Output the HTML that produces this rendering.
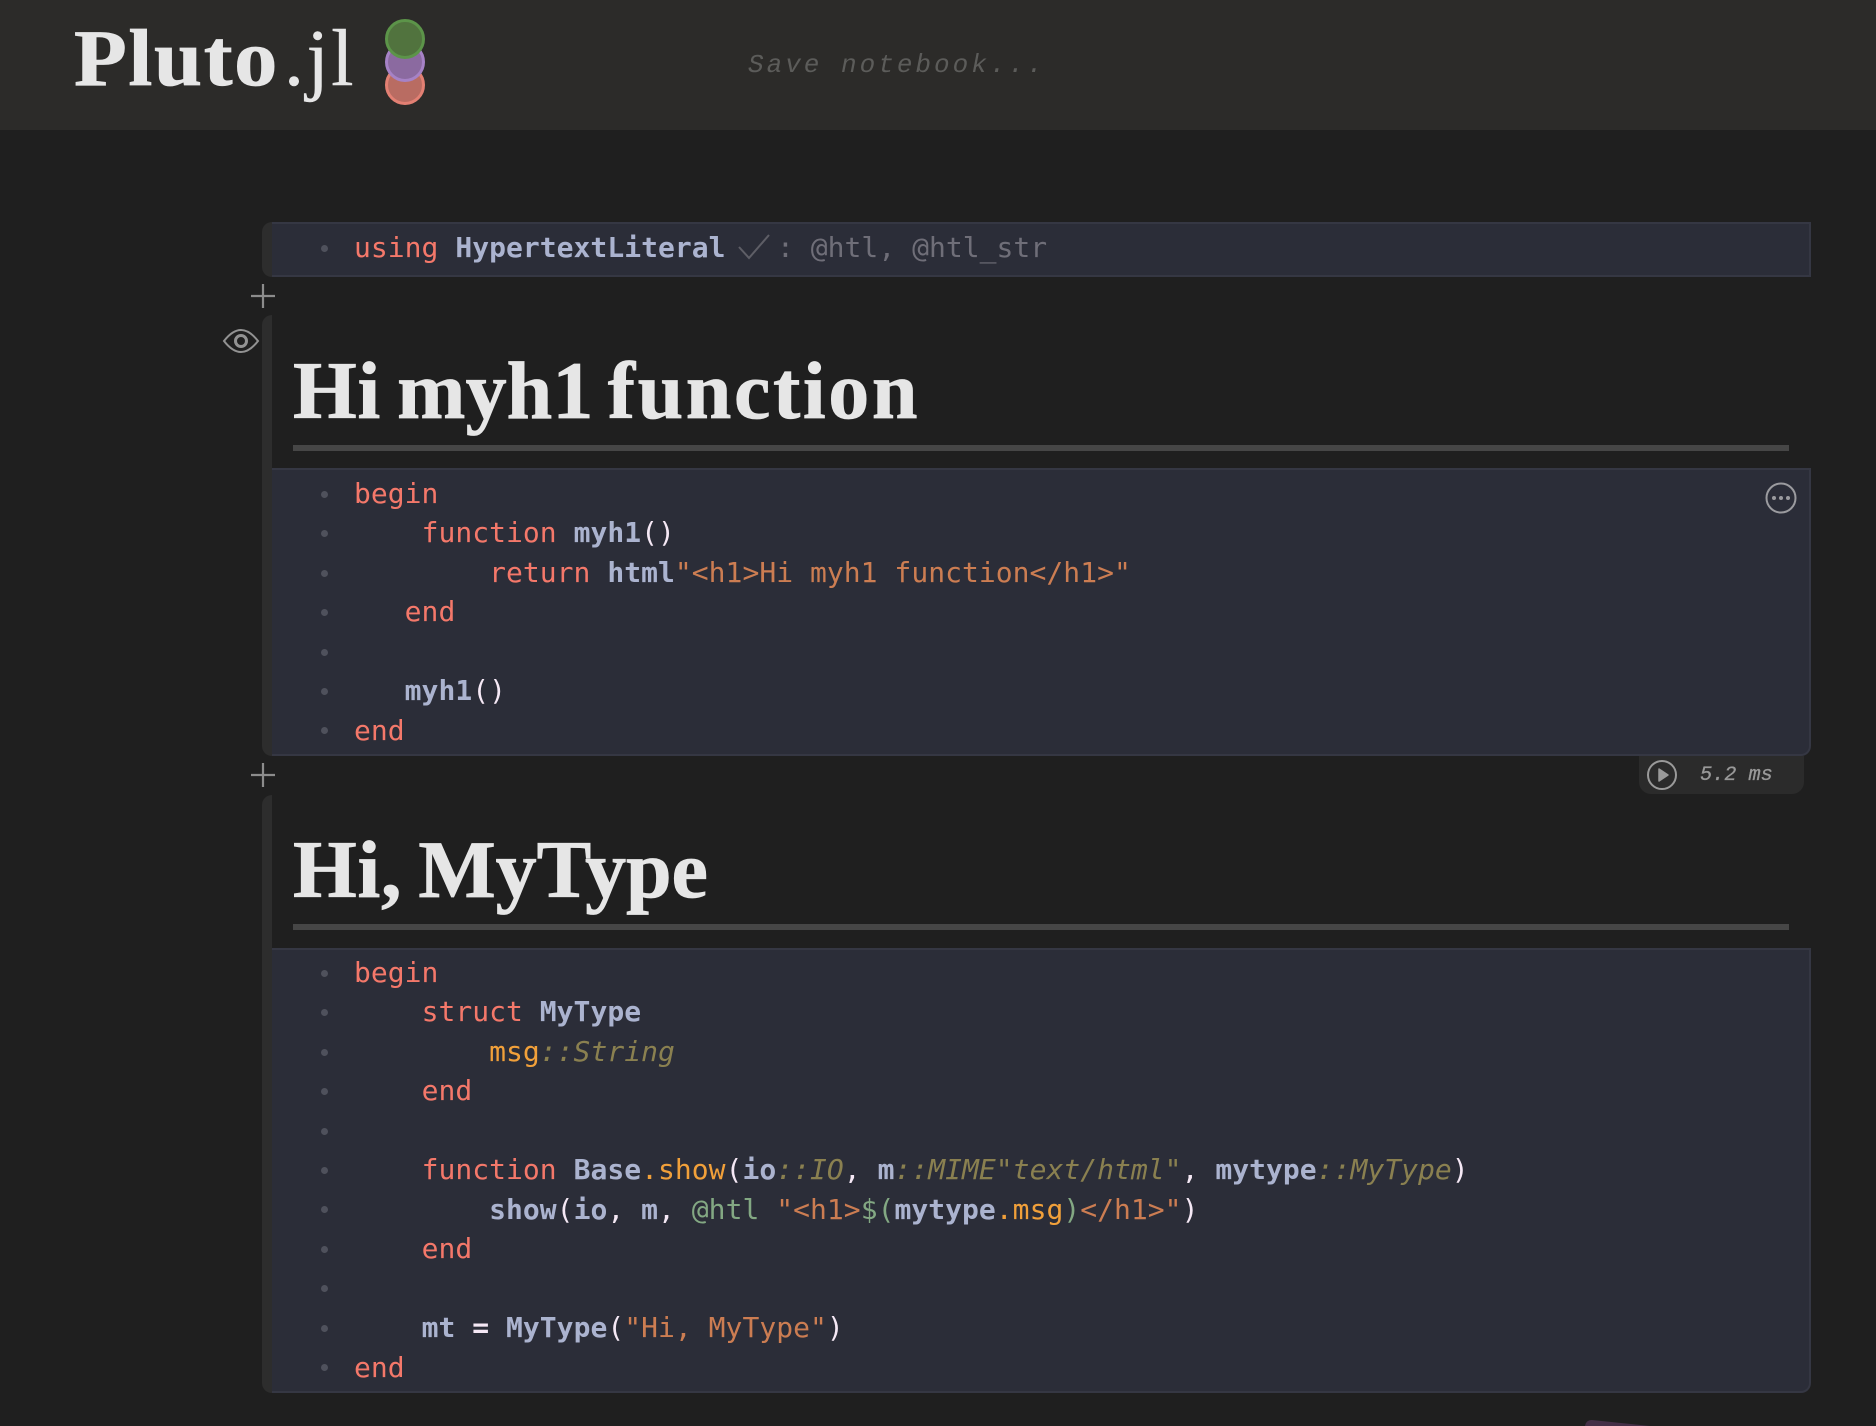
<!DOCTYPE html>
<html lang="en"><head><meta charset="utf-8"><title>Pluto.jl</title>
<style>
html,body{margin:0;padding:0;width:1876px;height:1426px;overflow:hidden;background:#1f1f1f}
.a{position:absolute}
#hdr{left:0;top:0;width:1876px;height:130px;background:#2c2b29}
.logo{top:2px;font:bold 80px/114px "Liberation Serif",serif;color:#e6e6e6;white-space:pre}
.save{left:748px;top:46px;font:italic 26px/38px "Liberation Mono",monospace;letter-spacing:3px;color:#5c5c5a;white-space:pre}
.bar{background:#2d2d2d;left:262px;width:16px}
.code{background:#2b2d38;border:solid #353743;border-width:2px 2px 2px 0;box-sizing:border-box;left:272px;width:1539px}
h1{position:absolute;margin:0;left:293px;font:bold 82px/100px "Liberation Serif",serif;color:#e6e6e6;letter-spacing:.7px;white-space:pre;-webkit-text-stroke:.8px #e6e6e6}
.hr{left:293px;width:1496px;height:6px;background:#464646}
pre{position:absolute;margin:0;left:354px;font:28px/39.45px "DejaVu Sans Mono",monospace;letter-spacing:.03px;color:#f5e8f5}
.k{color:#f4786a}.i{color:#abb3cf;font-weight:bold}.s{color:#cc7d52}.o{color:#f1a03a}.g{color:#6f6e78}
.t{color:#8a8050;font-style:italic}.m{color:#83a883}
.d{position:absolute;left:321px;width:7px;height:7px;border-radius:50%;background:#4f515c}
.rt{left:1639px;top:756px;width:165px;height:38px;background:#2b2b2b;border-radius:0 0 12px 12px}
.ms{left:1700px;top:761px;font:italic 20.2px/30px "Liberation Mono",monospace;color:#999;white-space:pre;-webkit-text-stroke:.3px #999}
</style></head><body>
<div class="a" id="hdr"></div>
<div class="a logo" style="left:74px;letter-spacing:1.5px;transform:scaleX(1.08);transform-origin:0 0;-webkit-text-stroke:.8px #e6e6e6">Pluto</div>
<div class="a logo" style="left:284px;font-weight:normal;letter-spacing:2.5px;-webkit-text-stroke:.5px #e6e6e6">.jl</div>
<svg class="a" style="left:380px;top:15px" width="50" height="95" viewBox="380 15 50 95">
<circle cx="405" cy="85" r="18.5" fill="#b96c62" stroke="#e38073" stroke-width="3"/>
<circle cx="405" cy="62" r="18.5" fill="#8b6aa0" stroke="#a682c6" stroke-width="3"/>
<circle cx="405" cy="39" r="18.5" fill="#51733e" stroke="#5c9449" stroke-width="3"/>
</svg>
<div class="a save">Save notebook...</div>

<div class="a bar" style="top:222px;height:55px;border-radius:10px 0 0 10px"></div>
<div class="a code" style="top:222px;height:55px"></div>
<div class="d" style="top:245px"></div>
<pre style="top:228px"><span class="k">using</span> <span class="i">HypertextLiteral</span></pre>
<svg class="a" style="left:735px;top:232px" width="40" height="30" viewBox="735 232 40 30"><path d="M739 247L749 258L769 235" fill="none" stroke="#5e5e66" stroke-width="2"/></svg>
<pre class="g" style="top:228px;left:777px"><span class="g">: @htl, @htl_str</span></pre>

<svg class="a" style="left:248px;top:281px" width="30" height="30"><path d="M15 3V27M3 15H27" stroke="#8c8c8c" stroke-width="2.2"/></svg>
<svg class="a" style="left:222px;top:326px" width="38" height="30" viewBox="222 326 38 30"><path d="M224 341C231 332 237 330 241 330C245 330 251 332 258 341C251 350 245 352 241 352C237 352 231 350 224 341Z" fill="none" stroke="#929292" stroke-width="2"/><circle cx="241" cy="341" r="5.5" fill="none" stroke="#929292" stroke-width="3"/></svg>

<div class="a bar" style="top:315px;height:441px;width:10px;border-radius:10px 0 0 10px"></div>
<h1 style="top:341px">Hi<span style="margin-left:-5px"> </span><span style="letter-spacing:.1px">myh1</span><span style="margin-left:-7px"> </span><span style="letter-spacing:2.6px">function</span></h1>
<div class="a hr" style="top:445px"></div>
<div class="a code" style="top:468px;height:288px;border-radius:0 0 10px 0"></div>
<div class="d" style="top:491px"></div><div class="d" style="top:530px"></div><div class="d" style="top:570px"></div><div class="d" style="top:609px"></div><div class="d" style="top:649px"></div><div class="d" style="top:688px"></div><div class="d" style="top:727px"></div>
<pre style="top:474px"><span class="k">begin</span>
    <span class="k">function</span> <span class="i">myh1</span>()
        <span class="k">return</span> <span class="i">html</span><span class="s">"&lt;h1&gt;Hi myh1 function&lt;/h1&gt;"</span>
   <span class="k">end</span>

   <span class="i">myh1</span>()
<span class="k">end</span></pre>
<svg class="a" style="left:1764px;top:481px" width="34" height="34" viewBox="1764 481 34 34"><circle cx="1781" cy="498" r="14.5" fill="none" stroke="#9b9b9f" stroke-width="2"/><circle cx="1774" cy="498" r="2" fill="#9b9b9f"/><circle cx="1781" cy="498" r="2" fill="#9b9b9f"/><circle cx="1788" cy="498" r="2" fill="#9b9b9f"/></svg>

<div class="a rt"></div>
<svg class="a" style="left:1645px;top:758px" width="34" height="34" viewBox="1645 758 34 34"><circle cx="1662" cy="775" r="14" fill="none" stroke="#9a9a9a" stroke-width="2"/><path d="M1659 769L1668 775L1659 781Z" fill="#9a9a9a" stroke="#9a9a9a" stroke-width="1.5" stroke-linejoin="round"/></svg>
<div class="a ms">5.2 ms</div>

<svg class="a" style="left:248px;top:760px" width="30" height="30"><path d="M15 3V27M3 15H27" stroke="#8c8c8c" stroke-width="2.2"/></svg>

<div class="a bar" style="top:795px;height:598px;width:10px;border-radius:10px 0 0 10px"></div>
<h1 style="top:820px">Hi,<span style="margin-left:-5px"> </span><span style="letter-spacing:-.1px">MyType</span></h1>
<div class="a hr" style="top:924px"></div>
<div class="a code" style="top:948px;height:445px;border-radius:0 0 10px 0"></div>
<div class="d" style="top:970px"></div><div class="d" style="top:1009px"></div><div class="d" style="top:1049px"></div><div class="d" style="top:1088px"></div><div class="d" style="top:1128px"></div><div class="d" style="top:1167px"></div><div class="d" style="top:1206px"></div><div class="d" style="top:1246px"></div><div class="d" style="top:1285px"></div><div class="d" style="top:1325px"></div><div class="d" style="top:1364px"></div>
<pre style="top:953px"><span class="k">begin</span>
    <span class="k">struct</span> <span class="i">MyType</span>
        <span class="o">msg</span><span class="t">::String</span>
    <span class="k">end</span>

    <span class="k">function</span> <span class="i">Base</span><span class="o">.show</span>(<span class="i">io</span><span class="t">::IO</span>, <span class="i">m</span><span class="t">::MIME"text/html"</span>, <span class="i">mytype</span><span class="t">::MyType</span>)
        <span class="i">show</span>(<span class="i">io</span>, <span class="i">m</span>, <span class="m">@htl</span> <span class="s">"&lt;h1&gt;</span><span class="m">$(</span><span class="i">mytype</span><span class="o">.msg</span><span class="m">)</span><span class="s">&lt;/h1&gt;"</span>)
    <span class="k">end</span>

    <span class="i">mt</span> <span class="i" style="color:#f5e8f5">=</span> <span class="i">MyType</span>(<span class="s">"Hi, MyType"</span>)
<span class="k">end</span></pre>
<svg class="a" style="left:1580px;top:1416px" width="90" height="10" viewBox="1580 1416 90 10"><path d="M1585 1426Q1586 1420 1592 1420L1650 1426Z" fill="#452f47"/></svg>
</body></html>
